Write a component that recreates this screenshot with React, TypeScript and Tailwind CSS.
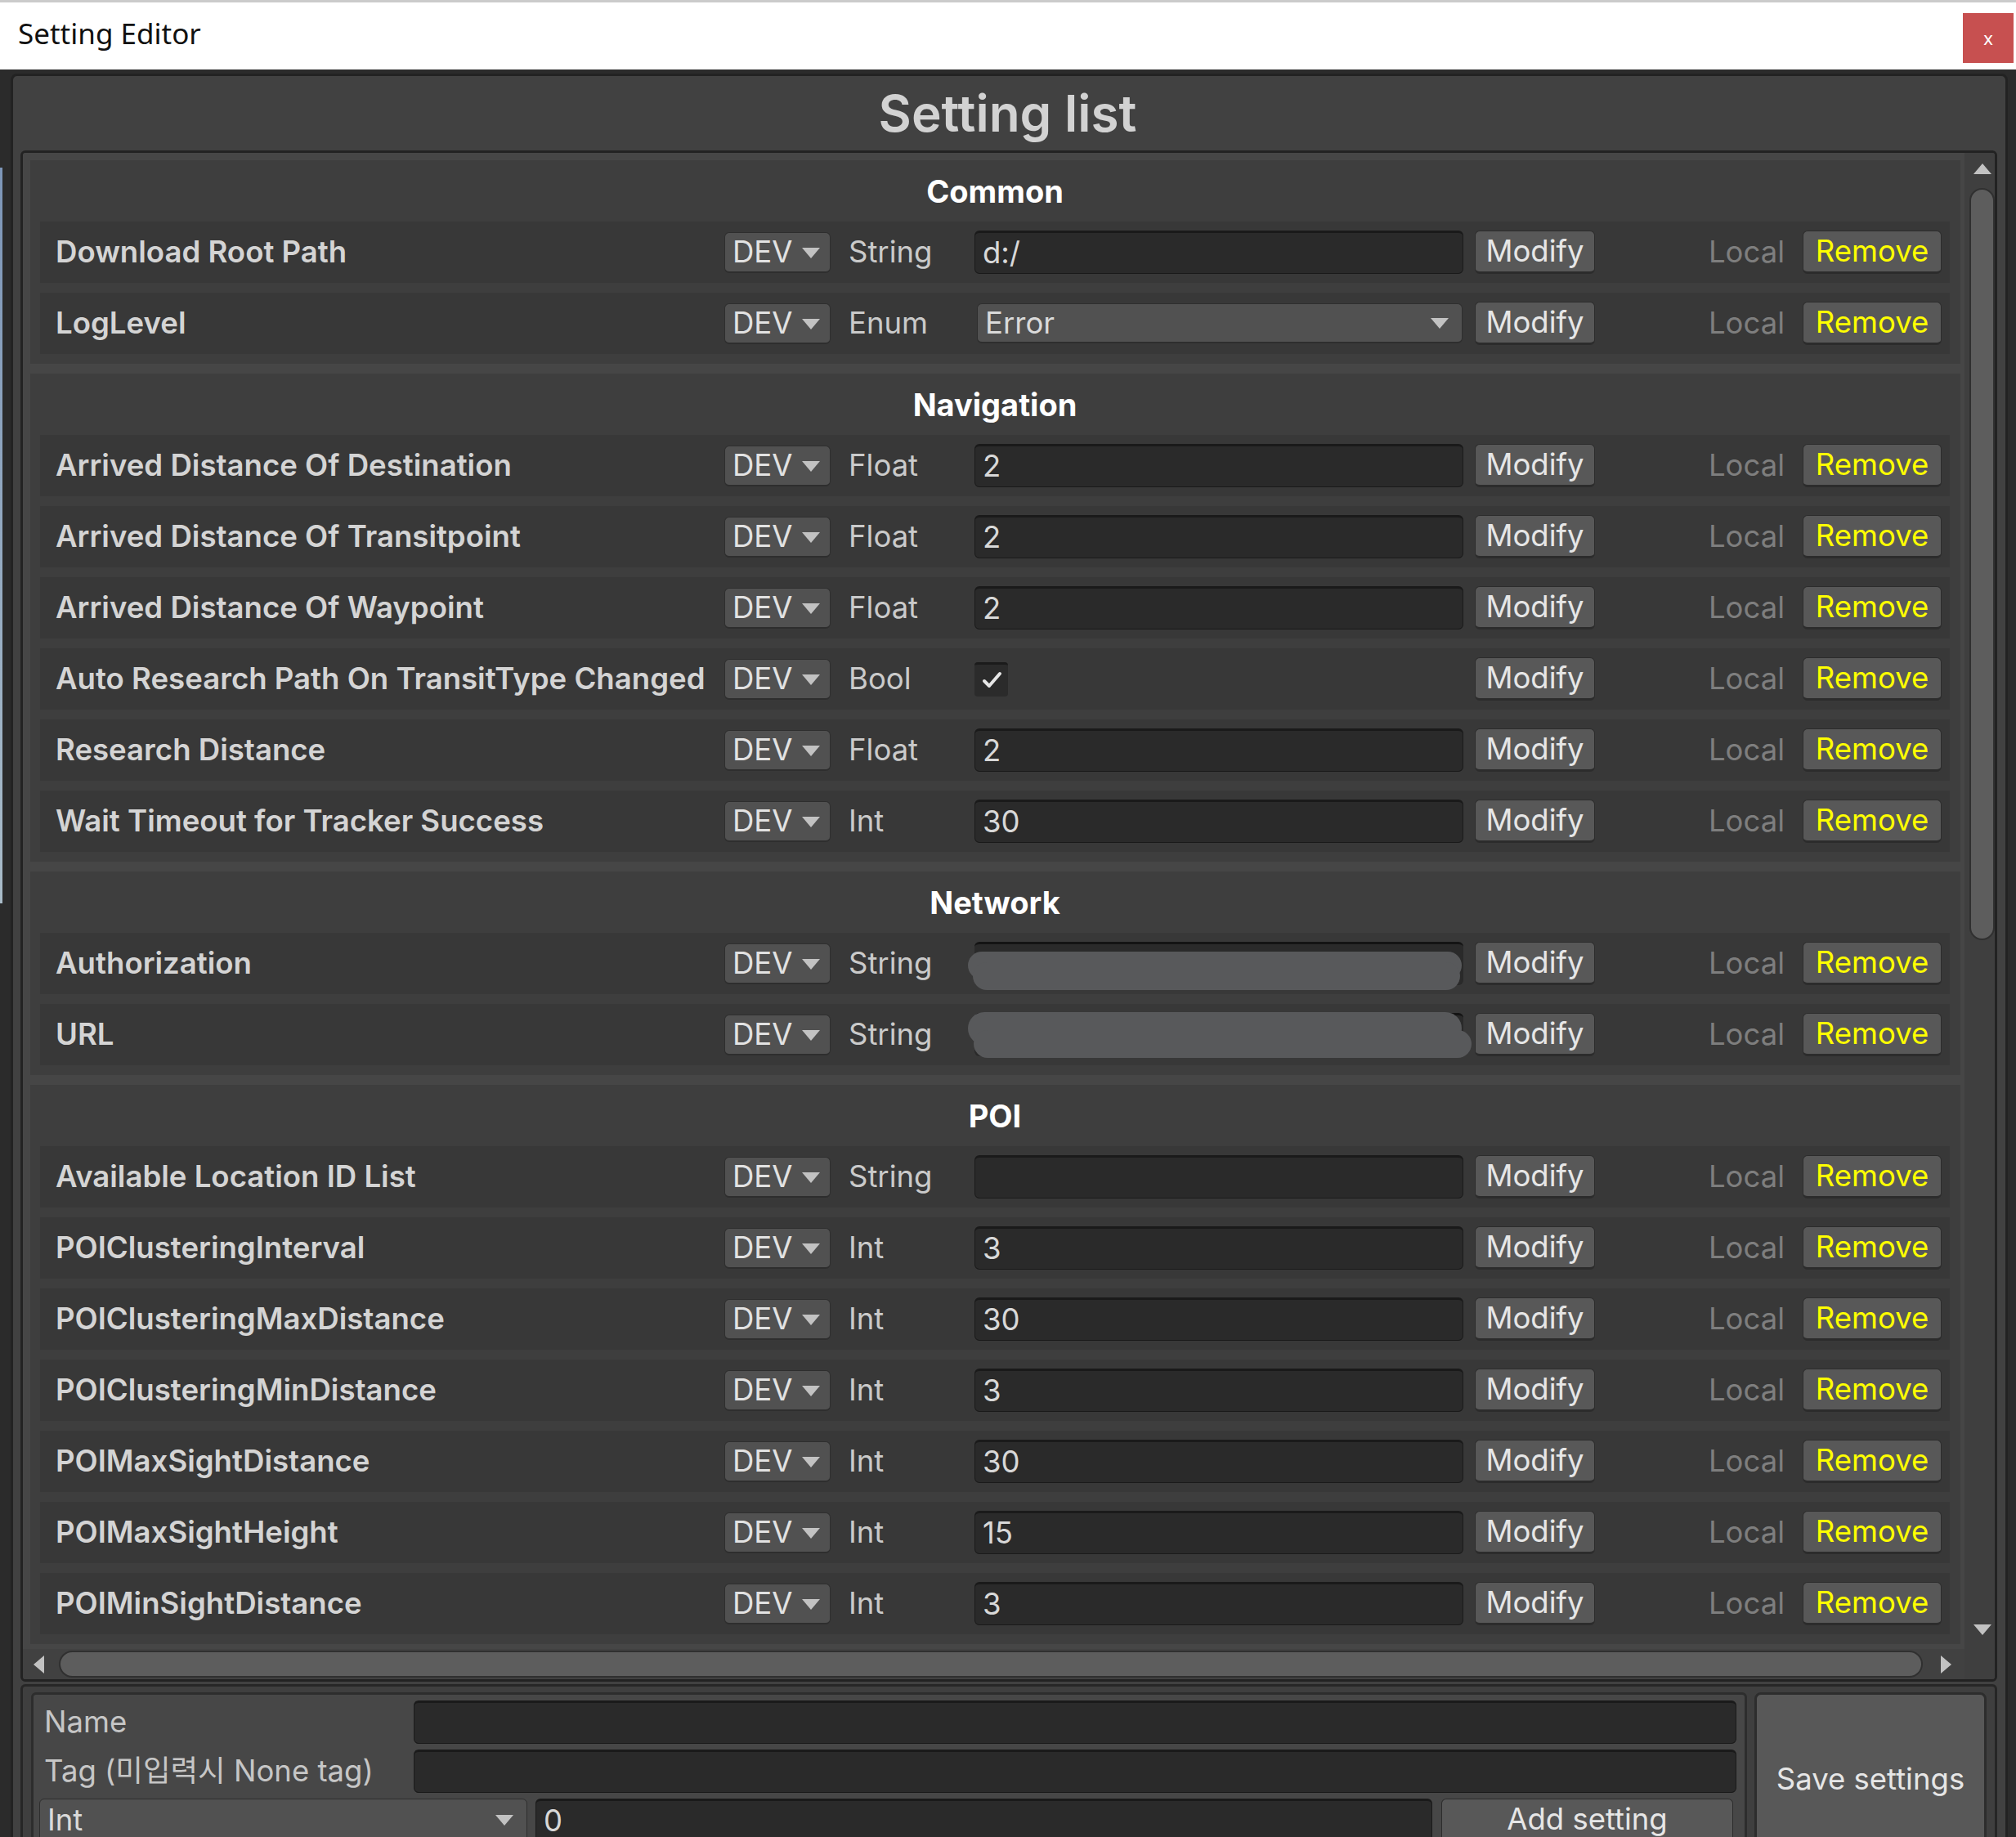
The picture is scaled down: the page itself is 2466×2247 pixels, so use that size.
import React from "react";

type Row = { name: string; type: string; kind?: "text" | "enum" | "bool" | "blob1" | "blob2"; value?: string };
type Section = { title: string; rows: Row[] };

const data: Section[] = [
  {
    title: "Common",
    rows: [
      { name: "Download Root Path", type: "String", value: "d:/" },
      { name: "LogLevel", type: "Enum", kind: "enum", value: "Error" },
    ],
  },
  {
    title: "Navigation",
    rows: [
      { name: "Arrived Distance Of Destination", type: "Float", value: "2" },
      { name: "Arrived Distance Of Transitpoint", type: "Float", value: "2" },
      { name: "Arrived Distance Of Waypoint", type: "Float", value: "2" },
      { name: "Auto Research Path On TransitType Changed", type: "Bool", kind: "bool" },
      { name: "Research Distance", type: "Float", value: "2" },
      { name: "Wait Timeout for Tracker Success", type: "Int", value: "30" },
    ],
  },
  {
    title: "Network",
    rows: [
      { name: "Authorization", type: "String", kind: "blob1" },
      { name: "URL", type: "String", kind: "blob2" },
    ],
  },
  {
    title: "POI",
    rows: [
      { name: "Available Location ID List", type: "String", value: "" },
      { name: "POIClusteringInterval", type: "Int", value: "3" },
      { name: "POIClusteringMaxDistance", type: "Int", value: "30" },
      { name: "POIClusteringMinDistance", type: "Int", value: "3" },
      { name: "POIMaxSightDistance", type: "Int", value: "30" },
      { name: "POIMaxSightHeight", type: "Int", value: "15" },
      { name: "POIMinSightDistance", type: "Int", value: "3" },
    ],
  },
];

function Tri({ dir = "down", className = "" }: { dir?: "down" | "up" | "left" | "right"; className?: string }) {
  const pts =
    dir === "down"
      ? "0,0 22,0 11,13"
      : dir === "up"
      ? "0,13 22,13 11,0"
      : dir === "left"
      ? "13,0 13,22 0,11"
      : "0,0 0,22 13,11";
  const w = dir === "down" || dir === "up" ? 22 : 13;
  const h = dir === "down" || dir === "up" ? 13 : 22;
  return (
    <svg width={w} height={h} viewBox={`0 0 ${w} ${h}`} className={className}>
      <polygon points={pts} fill="#c2c2c2" />
    </svg>
  );
}

function DevBox() {
  return (
    <div className="flex h-[50px] w-[130px] shrink-0 items-center rounded-[6px] border border-[#2e2e2e] border-b-[2px] bg-[#515151] pl-[9px]">
      <span className="text-[36.5px] leading-none text-[#e2e2e2]">DEV</span>
      <Tri className="ml-[12px] mt-[2px]" />
    </div>
  );
}

function Value({ row }: { row: Row }) {
  if (row.kind === "enum") {
    return (
      <div className="ml-[3px] mr-[1px] flex h-[49px] w-[594px] shrink-0 items-center justify-between rounded-[6px] border border-[#2e2e2e] border-b-[2px] bg-[#515151] pl-[9px] pr-[16px]">
        <span className="text-[36.5px] leading-none text-[#dadada]">{row.value}</span>
        <Tri />
      </div>
    );
  }
  if (row.kind === "bool") {
    return (
      <div className="w-[598px] shrink-0">
        <div className="flex h-[42px] w-[41px] items-center justify-center rounded-[4px] border-t-[3px] border-[#1b1b1b] bg-[#2b2b2b]">
          <svg width="30" height="26" viewBox="0 0 30 26">
            <path d="M6 14 L12 20 L25 5" fill="none" stroke="#e6e6e6" strokeWidth="4" strokeLinecap="round" strokeLinejoin="round" />
          </svg>
        </div>
      </div>
    );
  }
  if (row.kind === "blob1" || row.kind === "blob2") {
    return (
      <div className="relative h-[53px] w-[598px] shrink-0 rounded-[6px] border-t-[3px] border-[#141414] bg-[#2a2a2a]">
        {row.kind === "blob1" ? (
          <>
            <div className="absolute left-[-8px] top-[9px] h-[34px] w-[604px] rounded-full bg-[#58595b]" />
            <div className="absolute left-[-2px] top-[22px] h-[34px] w-[596px] rounded-full bg-[#58595b]" />
          </>
        ) : (
          <>
            <div className="absolute left-[-8px] top-[-4px] h-[40px] w-[604px] rounded-full bg-[#58595b]" />
            <div className="absolute left-[-1px] top-[18px] h-[34px] w-[609px] rounded-full bg-[#58595b]" />
          </>
        )}
      </div>
    );
  }
  return (
    <div className="flex h-[53px] w-[598px] shrink-0 items-center rounded-[6px] border-x border-b border-t-[3px] border-[#1a1a1a] bg-[#2a2a2a] pl-[9px]">
      <span className="text-[36.5px] leading-none text-[#d8d8d8]">{row.value}</span>
    </div>
  );
}

function Btn({ children, className = "", w }: { children: React.ReactNode; className?: string; w: string }) {
  return (
    <div
      className={`flex h-[53px] shrink-0 items-center justify-center rounded-[6px] border border-b-[3px] border-[#2c2c2c] bg-[#585858] text-[36.5px] leading-none ${w} ${className}`}
    >
      {children}
    </div>
  );
}

function SettingRow({ row }: { row: Row }) {
  return (
    <div className="flex h-[75px] items-center bg-[#383838] pl-[19px] pr-[10px]">
      <div className="w-[818px] shrink-0 whitespace-nowrap text-[36.6px] font-semibold leading-none text-[#d4d4d4]">{row.name}</div>
      <DevBox />
      <div className="ml-[22px] w-[154px] shrink-0 text-[36.5px] leading-none text-[#cacaca]">{row.type}</div>
      <Value row={row} />
      <Btn w="w-[147px] ml-[14px]" className="text-[#e6e6e6]">
        Modify
      </Btn>
      <div className="w-[254px] shrink-0 pr-[22px] text-right text-[36.5px] leading-none text-[#7e7e7e]">Local</div>
      <Btn w="w-[170px]" className="text-[#ffff00]">
        Remove
      </Btn>
    </div>
  );
}

function SectionBlock({ s }: { s: Section }) {
  return (
    <div className="flex w-[2361px] shrink-0 flex-col gap-[12px] bg-[#3e3e3e] pb-[12px] pl-[12px] pr-[13px]">
      <div className="-mb-[12px] flex h-[75px] items-center justify-center text-[38px] font-bold leading-none text-white">
        {s.title}
      </div>
      {s.rows.map((r) => (
        <SettingRow key={r.name} row={r} />
      ))}
    </div>
  );
}

export default function App() {
  return (
    <div className="flex h-[2247px] w-[2466px] flex-col overflow-hidden bg-[#2b2b2b] font-['Inter','Noto_Sans_CJK_KR',sans-serif]">
      {/* title bar */}
      <div className="flex h-[85px] shrink-0 items-start justify-between border-t-[3px] border-[#cbcbcb] bg-white">
        <div className="mt-[14px] pl-[22px] font-['Noto_Sans',sans-serif] text-[35px] leading-[48px] text-[#111]">Setting Editor</div>
        <div className="mr-[3px] mt-[13px] flex h-[61px] w-[62px] items-center justify-center bg-[#c75050] font-['Noto_Sans',sans-serif] text-[22px] text-white">
          x
        </div>
      </div>

      <div className="flex flex-1">
        {/* left edge */}
        <div className="flex w-[13px] shrink-0 flex-col">
          <div className="mt-[120px] h-[900px] w-[3px] bg-gradient-to-b from-[#7d96b8] to-[#a9bcc9]" />
        </div>

        {/* main panel */}
        <div className="mt-[5px] flex w-[2443px] shrink-0 flex-col rounded-t-[8px] border-[3px] border-[#222] bg-[#414141]">
          <div className="flex h-[91px] shrink-0 items-center justify-center pr-[4px] text-[62px] font-semibold leading-none text-[#d2d2d2]">
            Setting list
          </div>

          {/* scroll view */}
          <div className="ml-[9px] flex h-[1873px] w-[2418px] shrink-0 flex-col overflow-hidden rounded-[6px] border-[3px] border-[#222]">
            <div className="flex h-[1830px]">
              <div className="flex flex-1 flex-col gap-[12px] overflow-hidden bg-[#464646] pl-[9px] pt-[9px]">
                {data.map((s) => (
                  <SectionBlock key={s.title} s={s} />
                ))}
              </div>
              <div className="flex w-[37px] shrink-0 flex-col items-center bg-[#3f3f3f] pb-[17px] pt-[13px]">
                <Tri dir="up" className="ml-[7px]" />
                <div className="ml-[5px] mt-[17px] h-[920px] w-[31px] rounded-full border-[2px] border-[#303030] bg-[#5d5d5d]" />
                <div className="flex-1" />
                <Tri dir="down" className="ml-[7px]" />
              </div>
            </div>
            <div className="flex h-[37px] shrink-0">
              <div className="flex flex-1 items-center bg-[#414141] pl-[13px]">
                <Tri dir="left" />
                <div className="ml-[18px] h-[33px] w-[2280px] rounded-full border-[2px] border-[#303030] bg-[#5d5d5d]" />
                <Tri dir="right" className="ml-[22px]" />
              </div>
              <div className="w-[37px] shrink-0 bg-[#3f3f3f]" />
            </div>
          </div>

          {/* bottom panel */}
          <div className="ml-[9px] mt-[3px] flex h-[300px] w-[2418px] shrink-0 gap-[9px] rounded-[6px] border-[3px] border-[#262626] bg-[#3f3f3f] pl-[10px] pr-[10px] pt-[7px]">
            <div className="flex h-[260px] w-[2099px] shrink-0 flex-col gap-[7px] rounded-[6px] border-[3px] border-[#2d2d2d] bg-[#474747] pt-[7px]">
              <div className="flex h-[53px] items-center">
                <div className="w-[465px] shrink-0 pl-[13px] text-[36.5px] leading-none text-[#c6c6c6]">Name</div>
                <div className="h-[53px] w-[1618px] rounded-[6px] border-x border-b border-t-[3px] border-[#1a1a1a] bg-[#2a2a2a]" />
              </div>
              <div className="flex h-[53px] items-center">
                <div className="w-[465px] shrink-0 whitespace-nowrap pl-[13px] text-[36.5px] leading-none text-[#c6c6c6]">Tag (미입력시 None tag)</div>
                <div className="h-[53px] w-[1618px] rounded-[6px] border-x border-b border-t-[3px] border-[#1a1a1a] bg-[#2a2a2a]" />
              </div>
              <div className="flex h-[53px] items-center pl-[7px]">
                <div className="flex h-[53px] w-[597px] shrink-0 items-center justify-between rounded-[6px] border border-[#2e2e2e] bg-[#515151] pl-[9px] pr-[16px]">
                  <span className="text-[36.5px] leading-none text-[#dadada]">Int</span>
                  <Tri />
                </div>
                <div className="ml-[10px] flex h-[53px] w-[1097px] shrink-0 items-center rounded-[6px] border-x border-b border-t-[3px] border-[#1a1a1a] bg-[#2a2a2a] pl-[9px]">
                  <span className="text-[36.5px] leading-none text-[#d8d8d8]">0</span>
                </div>
                <Btn w="w-[357px] ml-[11px]" className="text-[#e6e6e6]">
                  Add setting
                </Btn>
              </div>
            </div>
            <div className="flex h-[212px] w-[284px] shrink-0 items-center justify-center rounded-[8px] border-[3px] border-[#2d2d2d] bg-[#585858] text-[36.5px] leading-none text-[#e6e6e6]">
              Save settings
            </div>
          </div>
        </div>
      </div>
    </div>
  );
}
